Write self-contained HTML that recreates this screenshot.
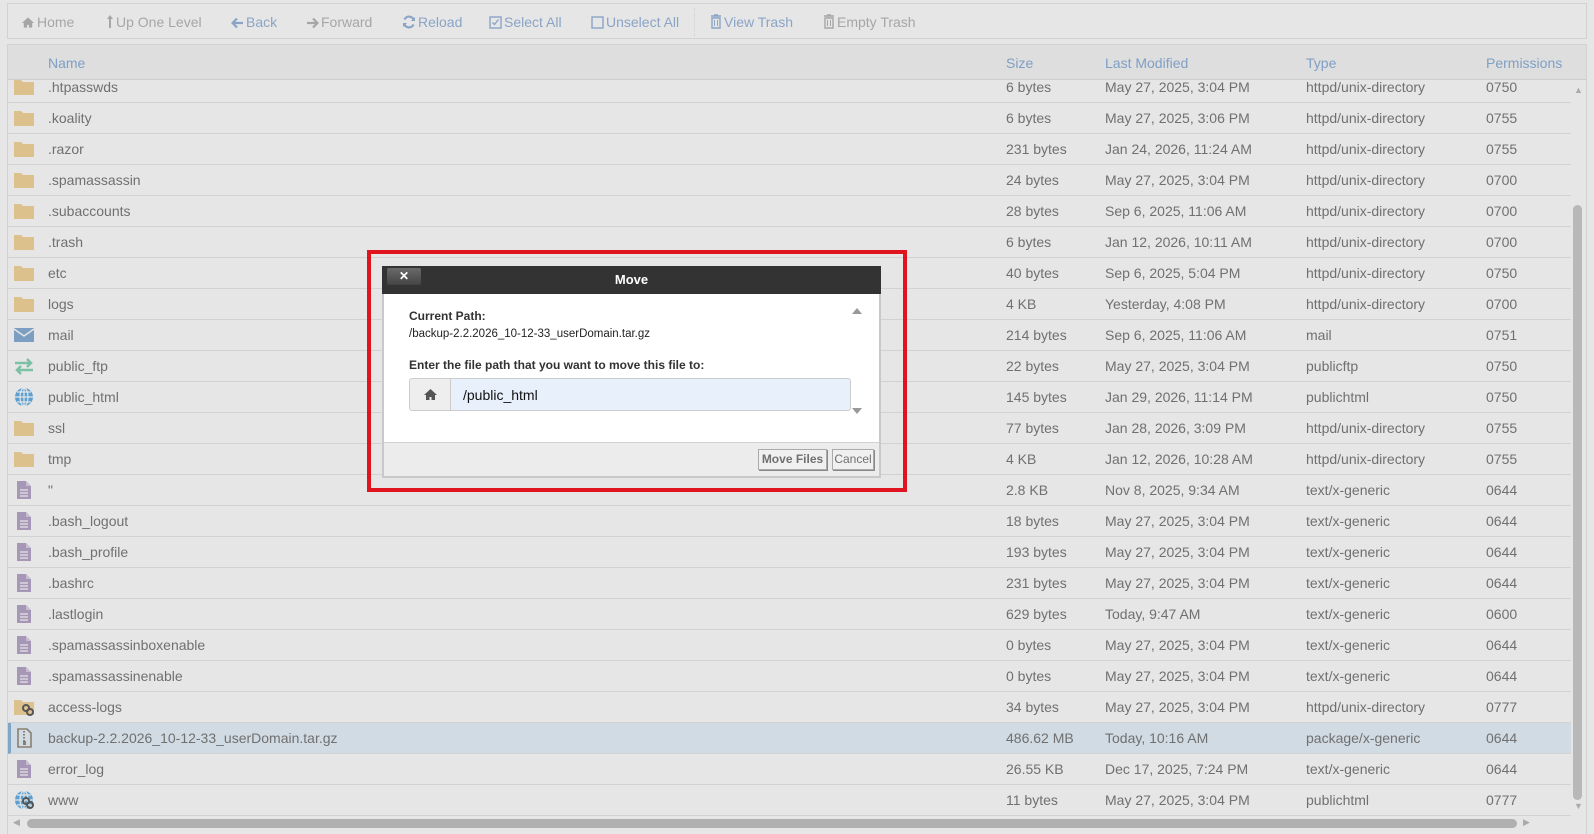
<!DOCTYPE html>
<html><head><meta charset="utf-8"><style>
*{box-sizing:border-box;margin:0;padding:0}
body{width:1594px;height:834px;background:#e6e6e6;font-family:"Liberation Sans",sans-serif;position:relative;overflow:hidden;color:#707070}
.tb{position:absolute;left:7px;top:3px;width:1580px;height:36px;border:1px solid #d2d2d2;background:#e6e6e6}
.tb span{position:absolute;top:10px;font-size:14px;color:#8aa4c6;white-space:nowrap}
.tb span.d{color:#a6a6a6}
.tb svg{vertical-align:-2px;margin-right:2px}
.sep{position:absolute;top:4px;width:1px;height:28px;border-left:1px dotted #cfcfcf}
.panel{position:absolute;left:7px;top:44px;width:1580px;height:790px;border:1px solid #d2d2d2;border-bottom:none;overflow:hidden}
.hdr{position:absolute;left:0;top:0;width:100%;height:35px;background:#dedede;border-bottom:1px solid #cdcdcd;z-index:2}
.hdr span{position:absolute;top:10px;font-size:14px;color:#7f9fc4}
.row{position:absolute;left:0;width:1563px;height:31px;border-bottom:1px solid #d2d2d2;font-size:14px}
.row span{position:absolute;top:7px;white-space:nowrap}
.row.sel{background:#d1dbe3;border-left:3px solid #7fa6c6}
.ic{position:absolute;left:5px;top:5px;width:22px;height:20px}
.vs{position:absolute;left:1565px;top:160px;width:9px;height:595px;background:#b8b8b8;border-radius:5px}
.hs{position:absolute;left:19px;top:774px;width:1490px;height:9px;background:#b0b0b0;border-radius:5px}
.ov{position:absolute;left:367px;top:250px;width:540px;height:242px;border:4px solid #e0141e}
.dlg{position:absolute;left:382px;top:266px;width:499px;height:212px;border:2px solid #c9c9c9;border-top:none;background:#fff}
.ttl{position:absolute;left:-2px;top:0;width:499px;height:28px;background:#333;color:#fff;font-weight:bold;font-size:13px;text-align:center;line-height:28px}
.x{position:absolute;left:5px;top:2px;width:34px;height:17px;background:linear-gradient(#6a6a6a,#444);border-radius:2px;color:#fff;font-size:12px;line-height:16px;text-align:center}
.body{font-size:12px;color:#222}
.ft{position:absolute;left:0;top:176px;width:495px;height:34px;background:#ececec;border-top:1px solid #d0d0d0}
.btn{position:absolute;top:6px;height:21px;border:1px solid #aaa;background:#f0f0f0;font-size:12px;line-height:19px;text-align:center;box-shadow:1px 1px 0 #888}
</style></head><body>
<div class="tb">
<span class="d" style="left:13px"><svg width="14" height="13" viewBox="0 0 15 13"><path d="M7.5 1L1 7h2v5h3.5V9h2v3H12V7h2z" fill="#a6a6a6"/></svg>Home</span>
<span class="d" style="left:98px"><svg width="8" height="15" viewBox="0 0 8 15"><path d="M4 1l-3 4h2v9h2V5h2z" fill="#a6a6a6"/></svg>Up One Level</span>
<span style="left:223px"><svg width="13" height="12" viewBox="0 0 13 12"><path d="M12 6H2M6 1.5L1.5 6 6 10.5" stroke="#8aa4c6" stroke-width="2.2" fill="none"/></svg>Back</span>
<span class="d" style="left:298px"><svg width="13" height="12" viewBox="0 0 13 12"><path d="M1 6h10M7 1.5L11.5 6 7 10.5" stroke="#a6a6a6" stroke-width="2.2" fill="none"/></svg>Forward</span>
<span style="left:394px"><svg width="14" height="14" viewBox="0 0 14 14"><path d="M12 6A5 5 0 0 0 2.5 4.5M2 8a5 5 0 0 0 9.5 1.5" stroke="#8aa4c6" stroke-width="2.2" fill="none"/><path d="M9 6h4V2zM5 8H1v4z" fill="#8aa4c6"/></svg>Reload</span>
<span style="left:481px"><svg width="13" height="13" viewBox="0 0 13 13"><rect x="1" y="1" width="11" height="11" fill="none" stroke="#8aa4c6" stroke-width="1.4"/><path d="M3.5 6.5l2 2 4-5" stroke="#8aa4c6" stroke-width="1.4" fill="none"/></svg>Select All</span>
<span style="left:583px"><svg width="13" height="13" viewBox="0 0 13 13"><rect x="1" y="1" width="11" height="11" fill="none" stroke="#8aa4c6" stroke-width="1.4"/></svg>Unselect All</span>
<div class="sep" style="left:686px"></div>
<span style="left:702px"><svg width="12" height="15" viewBox="0 0 12 15"><path d="M1 2h10M4 1h4M2 4h8v10H2z" stroke="#8aa4c6" stroke-width="1.4" fill="none"/><path d="M4.5 6v6M7.5 6v6" stroke="#8aa4c6"/></svg>View Trash</span>
<span class="d" style="left:815px"><svg width="12" height="15" viewBox="0 0 12 15"><path d="M1 2h10M4 1h4M2 4h8v10H2z" stroke="#a6a6a6" stroke-width="1.4" fill="none"/><path d="M4.5 6v6M7.5 6v6" stroke="#a6a6a6"/></svg>Empty Trash</span>
</div>
<div class="panel">
<div class="hdr"><span style="left:40px">Name</span><span style="left:998px">Size</span><span style="left:1097px">Last Modified</span><span style="left:1298px">Type</span><span style="left:1478px">Permissions</span></div>
<div id="rows"></div>
<div class="vs"></div>
<div style="position:absolute;left:1566px;top:40px;color:#aaa;font-size:9px">▲</div>
<div style="position:absolute;left:1566px;top:756px;color:#aaa;font-size:9px">▼</div>
<div class="hs"></div>
<div style="position:absolute;left:5px;top:772px;color:#aaa;font-size:9px">◀</div>
<div style="position:absolute;left:1515px;top:772px;color:#aaa;font-size:9px">▶</div>
</div>
<div class="ov"></div>
<div class="dlg">
<div class="ttl"><div class="x">✕</div>Move</div>
<div class="body">
<div style="position:absolute;left:25px;top:43px;font-weight:bold;color:#333">Current Path:</div>
<div style="position:absolute;left:25px;top:62px;font-size:11.5px">/backup-2.2.2026_10-12-33_userDomain.tar.gz</div>
<div style="position:absolute;left:25px;top:92px;font-weight:bold;color:#333">Enter the file path that you want to move this file to:</div>
<div style="position:absolute;left:25px;top:112px;width:442px;height:33px;border:1px solid #ccc;border-radius:3px;background:#e8f0fb;overflow:hidden">
<div style="position:absolute;left:0;top:0;width:41px;height:31px;background:#eee;border-right:1px solid #ccc"><svg width="15" height="13" viewBox="0 0 15 13" style="position:absolute;left:13px;top:9px"><path d="M7.5 1L1 7h2v5h3.5V9h2v3H12V7h2z" fill="#555"/></svg></div>
<div style="position:absolute;left:53px;top:8px;font-size:14px;color:#111">/public_html</div></div>
<div style="position:absolute;left:468px;top:42px;width:6px;height:0;border-left:5px solid transparent;border-right:5px solid transparent;border-bottom:6px solid #999"></div>
<div style="position:absolute;left:468px;top:142px;width:6px;height:0;border-left:5px solid transparent;border-right:5px solid transparent;border-top:6px solid #999"></div>
</div>
<div class="ft"><div class="btn" style="left:374px;width:69px;font-weight:bold">Move Files</div><div class="btn" style="left:448px;width:42px">Cancel</div></div>
</div>
<script>
const F='<svg class="ic" viewBox="0 0 22 20"><path d="M1 3h7l2 2h11v13H1z" fill="#dcc18c"/></svg>';
const D='<svg class="ic" viewBox="0 0 22 20"><path d="M4 1h9l5 5v13H4z" fill="#a597b5"/><path d="M13 1v5h5" fill="#c8bed3"/><path d="M7 10h8M7 13h8M7 16h8" stroke="#e6e6e6" stroke-width="1.3"/></svg>';
const L='<circle cx="17" cy="15" r="3" fill="none" stroke="#555" stroke-width="2"/><circle cx="13" cy="11" r="3" fill="none" stroke="#555" stroke-width="2"/>';
const M='<svg class="ic" viewBox="0 0 22 20"><rect x="1" y="3" width="20" height="14" fill="#7c9ec2"/><path d="M1 4l10 7 10-7" stroke="#e6e6e6" stroke-width="1.5" fill="none"/></svg>';
const P='<svg class="ic" viewBox="0 0 22 20"><path d="M2 7h16M14 3l4 4-4 4M20 14H4M8 10l-4 4 4 4" stroke="#7cc0a6" stroke-width="2.5" fill="none"/></svg>';
const G='<circle cx="11" cy="10" r="9" fill="#5c9fd2"/><path d="M2 10h18M11 1v18M4 5h14M4 15h14" stroke="#e6e6e6" stroke-width="1.2"/><ellipse cx="11" cy="10" rx="4" ry="9" fill="none" stroke="#e6e6e6" stroke-width="1.2"/>';
const Z='<svg class="ic" viewBox="0 0 22 20"><path d="M5 1h9l4 4v14H5z" fill="none" stroke="#8a7f70" stroke-width="1.6"/><path d="M11 3v10" stroke="#8a7f70" stroke-dasharray="1.5 1.5" stroke-width="2"/><rect x="10" y="13" width="3" height="4" fill="#8a7f70"/></svg>';
const rows=[
[F,'.htpasswds','6 bytes','May 27, 2025, 3:04 PM','httpd/unix-directory','0750'],
[F,'.koality','6 bytes','May 27, 2025, 3:06 PM','httpd/unix-directory','0755'],
[F,'.razor','231 bytes','Jan 24, 2026, 11:24 AM','httpd/unix-directory','0755'],
[F,'.spamassassin','24 bytes','May 27, 2025, 3:04 PM','httpd/unix-directory','0700'],
[F,'.subaccounts','28 bytes','Sep 6, 2025, 11:06 AM','httpd/unix-directory','0700'],
[F,'.trash','6 bytes','Jan 12, 2026, 10:11 AM','httpd/unix-directory','0700'],
[F,'etc','40 bytes','Sep 6, 2025, 5:04 PM','httpd/unix-directory','0750'],
[F,'logs','4 KB','Yesterday, 4:08 PM','httpd/unix-directory','0700'],
[M,'mail','214 bytes','Sep 6, 2025, 11:06 AM','mail','0751'],
[P,'public_ftp','22 bytes','May 27, 2025, 3:04 PM','publicftp','0750'],
['<svg class="ic" viewBox="0 0 22 20">'+G+'</svg>','public_html','145 bytes','Jan 29, 2026, 11:14 PM','publichtml','0750'],
[F,'ssl','77 bytes','Jan 28, 2026, 3:09 PM','httpd/unix-directory','0755'],
[F,'tmp','4 KB','Jan 12, 2026, 10:28 AM','httpd/unix-directory','0755'],
[D,'"','2.8 KB','Nov 8, 2025, 9:34 AM','text/x-generic','0644'],
[D,'.bash_logout','18 bytes','May 27, 2025, 3:04 PM','text/x-generic','0644'],
[D,'.bash_profile','193 bytes','May 27, 2025, 3:04 PM','text/x-generic','0644'],
[D,'.bashrc','231 bytes','May 27, 2025, 3:04 PM','text/x-generic','0644'],
[D,'.lastlogin','629 bytes','Today, 9:47 AM','text/x-generic','0600'],
[D,'.spamassassinboxenable','0 bytes','May 27, 2025, 3:04 PM','text/x-generic','0644'],
[D,'.spamassassinenable','0 bytes','May 27, 2025, 3:04 PM','text/x-generic','0644'],
['<svg class="ic" viewBox="0 0 22 20"><path d="M1 3h7l2 2h11v13H1z" fill="#dcc18c"/>'+L+'</svg>','access-logs','34 bytes','May 27, 2025, 3:04 PM','httpd/unix-directory','0777'],
[Z,'backup-2.2.2026_10-12-33_userDomain.tar.gz','486.62 MB','Today, 10:16 AM','package/x-generic','0644'],
[D,'error_log','26.55 KB','Dec 17, 2025, 7:24 PM','text/x-generic','0644'],
['<svg class="ic" viewBox="0 0 22 20">'+G+L+'</svg>','www','11 bytes','May 27, 2025, 3:04 PM','publichtml','0777']];
let h='';rows.forEach((r,i)=>{const s=i==21;const o=s?-3:0;
h+=`<div class="row${s?' sel':''}" style="top:${27+31*i}px">${r[0].replace('class="ic"',`class="ic" style="left:${5+o}px"`)}<span style="left:${40+o}px">${r[1]}</span><span style="left:${998+o}px">${r[2]}</span><span style="left:${1097+o}px">${r[3]}</span><span style="left:${1298+o}px">${r[4]}</span><span style="left:${1478+o}px">${r[5]}</span></div>`;});
document.getElementById('rows').innerHTML=h;
</script>
</body></html>
